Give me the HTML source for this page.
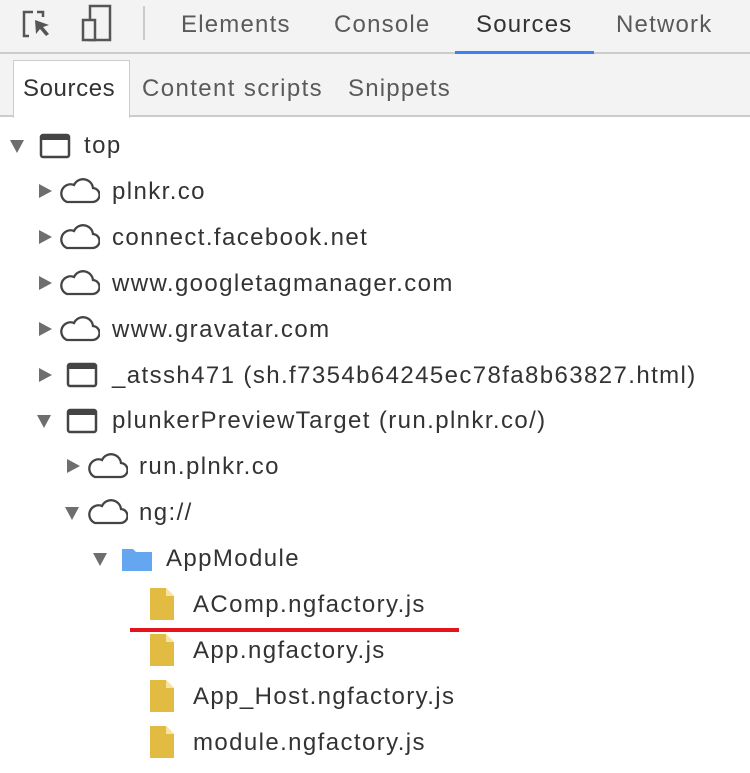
<!DOCTYPE html>
<html><head><meta charset="utf-8"><style>
body{margin:0;width:750px;height:773px;background:#fff;font-family:"Liberation Sans",sans-serif;color:#333;position:relative;overflow:hidden}
.bar1{position:absolute;left:0;top:0;width:750px;height:52px;background:#f3f3f3;border-bottom:2px solid #ccc}
.bar2{position:absolute;left:0;top:54px;width:750px;height:61px;background:#f3f3f3;border-bottom:2px solid #ccc}
.t{position:absolute;font-size:24px;white-space:nowrap;line-height:30px;letter-spacing:1.2px}
.tab{color:#5a5a5a}
.r{position:absolute;font-size:24px;white-space:nowrap;line-height:30px;color:#333;letter-spacing:1.4px}
svg{position:absolute}
</style></head><body>
<div class="bar1"></div>
<div class="bar2"></div>
<svg style="left:20px;top:8px" width="40" height="36" viewBox="0 0 40 36"><path d="M13 4H4V28h5" fill="none" stroke="#555" stroke-width="2.5"/><path d="M17 4h6v5" fill="none" stroke="#555" stroke-width="2.5"/><path d="M15 12l14 5-6 2 6 7-3 2-6-7-4 5z" fill="#555"/></svg>
<svg style="left:80px;top:4px" width="40" height="40" viewBox="0 0 40 40"><rect x="10" y="2" width="20" height="34" fill="none" stroke="#555" stroke-width="2.5"/><rect x="3" y="16" width="12" height="20" fill="#f3f3f3" stroke="#555" stroke-width="2.5"/></svg>
<div style="position:absolute;left:143px;top:6px;width:2px;height:34px;background:#ccc"></div>
<div class="t tab" style="left:181px;top:10px">Elements</div>
<div class="t tab" style="left:334px;top:10px">Console</div>
<div class="t tab" style="left:476px;top:10px;color:#333">Sources</div>
<div class="t tab" style="left:616px;top:10px">Network</div>
<div style="position:absolute;left:455px;top:51px;width:139px;height:3px;background:#3b82f0"></div>
<div style="position:absolute;left:13px;top:60px;width:115px;height:57px;background:#fff;border:1px solid #ccc;border-bottom:none"></div>
<div class="t" style="left:23px;top:74px;color:#333;letter-spacing:0.6px">Sources</div>
<div class="t tab" style="left:142px;top:74px;letter-spacing:1.4px">Content scripts</div>
<div class="t tab" style="left:348px;top:74px">Snippets</div>

<svg width="0" height="0"><defs>
<symbol id="down" viewBox="0 0 14 14"><path d="M0 1h14L7 14z" fill="#6e6e6e"/></symbol>
<symbol id="right" viewBox="0 0 14 14"><path d="M1 0v14L14 7z" fill="#6e6e6e"/></symbol>
<symbol id="frame" viewBox="0 0 32 26"><rect x="2" y="2" width="28" height="22" rx="2" fill="none" stroke="#444" stroke-width="2.5"/><rect x="2" y="2" width="28" height="5" fill="#444"/></symbol>
<symbol id="cloud" viewBox="0 0 42 28"><path d="M9 25h25a7 7 0 0 0 1-14 10 10 0 0 0-19-3 8 8 0 0 0-7 17z" fill="none" stroke="#444" stroke-width="2.3"/></symbol>
<symbol id="folder" viewBox="0 0 32 26"><path d="M1 3h11l3 3h16v19H1z" fill="#64a6ef"/></symbol>
<symbol id="file" viewBox="0 0 26 34"><path d="M1 1h16l8 8v24H1z" fill="#e2bb43"/><path d="M17 1v8h8z" fill="#f5e3a0"/></symbol>
</defs></svg>

<svg style="left:10px;top:139px" width="14" height="14"><use href="#down"/></svg>
<svg style="left:39px;top:133px" width="32" height="26"><use href="#frame"/></svg>
<div class="r" style="left:84px;top:131px">top</div>

<svg style="left:38px;top:184px" width="14" height="14"><use href="#right"/></svg>
<svg style="left:58px;top:177px" width="42" height="28"><use href="#cloud"/></svg>
<div class="r" style="left:112px;top:177px">plnkr.co</div>

<svg style="left:38px;top:230px" width="14" height="14"><use href="#right"/></svg>
<svg style="left:58px;top:223px" width="42" height="28"><use href="#cloud"/></svg>
<div class="r" style="left:112px;top:223px">connect.facebook.net</div>

<svg style="left:38px;top:276px" width="14" height="14"><use href="#right"/></svg>
<svg style="left:58px;top:269px" width="42" height="28"><use href="#cloud"/></svg>
<div class="r" style="left:112px;top:269px">www.googletagmanager.com</div>

<svg style="left:38px;top:322px" width="14" height="14"><use href="#right"/></svg>
<svg style="left:58px;top:315px" width="42" height="28"><use href="#cloud"/></svg>
<div class="r" style="left:112px;top:315px">www.gravatar.com</div>

<svg style="left:38px;top:368px" width="14" height="14"><use href="#right"/></svg>
<svg style="left:66px;top:362px" width="32" height="26"><use href="#frame"/></svg>
<div class="r" style="left:112px;top:361px">_atssh471 (sh.f7354b64245ec78fa8b63827.html)</div>

<svg style="left:37px;top:414px" width="14" height="14"><use href="#down"/></svg>
<svg style="left:66px;top:408px" width="32" height="26"><use href="#frame"/></svg>
<div class="r" style="left:112px;top:406px">plunkerPreviewTarget (run.plnkr.co/)</div>

<svg style="left:66px;top:459px" width="14" height="14"><use href="#right"/></svg>
<svg style="left:86px;top:452px" width="42" height="28"><use href="#cloud"/></svg>
<div class="r" style="left:139px;top:452px">run.plnkr.co</div>

<svg style="left:65px;top:506px" width="14" height="14"><use href="#down"/></svg>
<svg style="left:86px;top:498px" width="42" height="28"><use href="#cloud"/></svg>
<div class="r" style="left:139px;top:498px">ng://</div>

<svg style="left:93px;top:552px" width="14" height="14"><use href="#down"/></svg>
<svg style="left:121px;top:546px" width="32" height="26"><use href="#folder"/></svg>
<div class="r" style="left:166px;top:544px">AppModule</div>

<svg style="left:149px;top:587px" width="26" height="34"><use href="#file"/></svg>
<div class="r" style="left:193px;top:590px">AComp.ngfactory.js</div>
<div style="position:absolute;left:130px;top:628px;width:329px;height:4px;background:#e5141c"></div>

<svg style="left:149px;top:633px" width="26" height="34"><use href="#file"/></svg>
<div class="r" style="left:193px;top:636px">App.ngfactory.js</div>

<svg style="left:149px;top:679px" width="26" height="34"><use href="#file"/></svg>
<div class="r" style="left:193px;top:682px">App_Host.ngfactory.js</div>

<svg style="left:149px;top:725px" width="26" height="34"><use href="#file"/></svg>
<div class="r" style="left:193px;top:728px">module.ngfactory.js</div>
</body></html>
